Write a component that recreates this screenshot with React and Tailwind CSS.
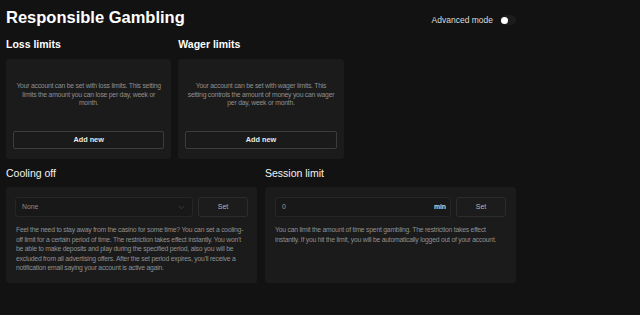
import { useState } from "react";
import { ChevronDown } from "lucide-react";

const font = { fontFamily: '"Liberation Sans", Arial, sans-serif' };

const LimitCard = ({ text }) => (
  <div className="flex h-[100px] flex-col rounded-[3px] bg-[#1b1b1b] px-[7px] pb-[10px] pt-[23px]">
    <p className="px-[2px] text-center text-[6.8px] leading-[8.5px] tracking-[-0.22px] text-[#8f8f8f]">{text}</p>
    <button className="mt-auto h-[18px] w-full rounded-[2px] border border-[#3c3c3c] bg-[#1a1a1a] text-[7.3px] font-bold text-[#e8e8e8]">
      Add new
    </button>
  </div>
);

const SetButton = () => (
  <button className="h-[20px] w-[50px] shrink-0 rounded-[3px] border border-[#2c2c2c] bg-[#1c1c1c] text-[7px] text-[#b5b5b5]">
    Set
  </button>
);

const App = () => {
  const [advanced, setAdvanced] = useState(false);

  return (
    <div className="min-h-[315px] w-full bg-[#121212] antialiased" style={font}>
      <div className="w-[522px] px-[6px] pt-[7px]">
        <div className="flex items-center justify-between">
          <h1 className="text-[16.5px] font-bold leading-[20px] text-white">Responsible Gambling</h1>
          <div className="mt-[6px] flex items-center gap-[7px]">
            <span className="text-[8.5px] text-[#dcdcdc]">Advanced mode</span>
            <button
              onClick={() => setAdvanced(!advanced)}
              className="flex h-[10px] w-[16px] items-center rounded-full bg-[#1c1c1c] px-[1px]"
            >
              <span className="h-[7px] w-[7px] rounded-full bg-white" />
            </button>
          </div>
        </div>

        <div className="mt-[11px] grid grid-cols-3 gap-x-[7px]">
          <h2 className="mb-[8px] text-[10.5px] font-bold leading-[13px] text-white">Loss limits</h2>
          <h2 className="mb-[8px] text-[10.5px] font-bold leading-[13px] text-white">Wager limits</h2>
          <div />
          <LimitCard text="Your account can be set with loss limits. This setting limits the amount you can lose per day, week or month." />
          <LimitCard text="Your account can be set with wager limits. This setting controls the amount of money you can wager per day, week or month." />
        </div>

        <div className="mt-[7px] grid grid-cols-2 gap-x-[8px]">
          <h2 className="mb-[7px] text-[10.5px] leading-[14px] text-[#f2f2f2]">Cooling off</h2>
          <h2 className="mb-[7px] text-[10.5px] leading-[14px] text-[#f2f2f2]">Session limit</h2>

          <div className="h-[96px] rounded-[3px] bg-[#1b1b1b] px-[9px] pt-[10px]">
            <div className="flex gap-[5px]">
              <div className="flex h-[20px] flex-1 items-center justify-between rounded-[3px] border border-[#262626] bg-[#181818] pl-[6px] pr-[6px]">
                <span className="text-[6.8px] text-[#8a8a8a]">None</span>
                <ChevronDown size={9} strokeWidth={1.5} className="text-[#555]" />
              </div>
              <SetButton />
            </div>
            <p className="mt-[8px] px-[1px] text-[6.8px] leading-[9.5px] tracking-[-0.22px] text-[#8f8f8f]">
              Feel the need to stay away from the casino for some time? You can set a cooling-off limit for a certain period of time. The restriction takes effect instantly. You won't be able to make deposits and play during the specified period, also you will be excluded from all advertising offers. After the set period expires, you'll receive a notification email saying your account is active again.
            </p>
          </div>

          <div className="h-[96px] rounded-[3px] bg-[#1b1b1b] px-[10px] pt-[10px]">
            <div className="flex gap-[5px]">
              <div className="flex h-[20px] flex-1 items-center justify-between rounded-[3px] border border-[#262626] bg-[#181818] pl-[6px] pr-[4px]">
                <span className="text-[6.8px] text-[#9a9a9a]">0</span>
                <span className="text-[6.8px] font-bold text-[#d5d5d5]">min</span>
              </div>
              <SetButton />
            </div>
            <p className="mt-[8px] text-[6.8px] leading-[9.5px] tracking-[-0.22px] text-[#8f8f8f]">
              You can limit the amount of time spent gambling. The restriction takes effect instantly. If you hit the limit, you will be automatically logged out of your account.
            </p>
          </div>
        </div>
      </div>
    </div>
  );
};

export default App;
